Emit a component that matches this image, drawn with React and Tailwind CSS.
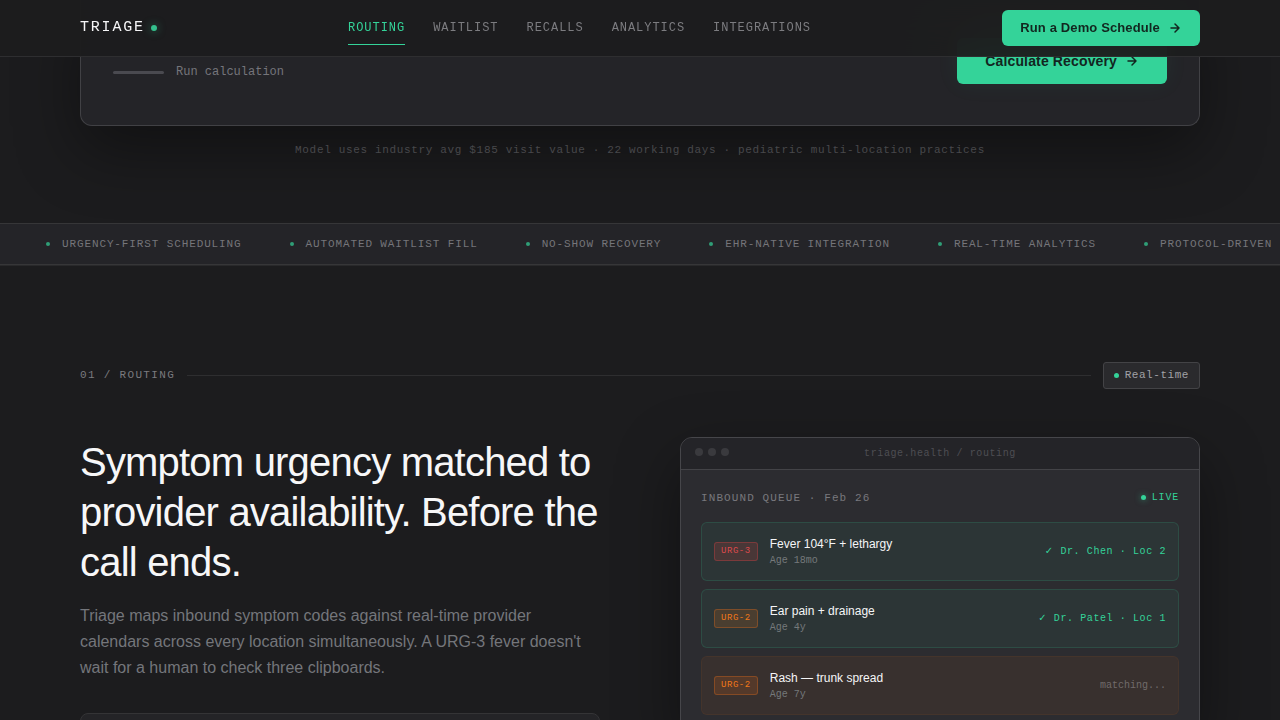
import React from "react";

const mono = "font-['Liberation_Mono','DejaVu_Sans',monospace]";

const navItems = ["ROUTING", "WAITLIST", "RECALLS", "ANALYTICS", "INTEGRATIONS"];

const capabilities = [
  "URGENCY-FIRST SCHEDULING",
  "AUTOMATED WAITLIST FILL",
  "NO-SHOW RECOVERY",
  "EHR-NATIVE INTEGRATION",
  "REAL-TIME ANALYTICS",
  "PROTOCOL-DRIVEN",
];

const queue = [
  { code: "URG-3", name: "Fever 104°F + lethargy", age: "Age 18mo", match: "✓ Dr. Chen · Loc 2" },
  { code: "URG-2", name: "Ear pain + drainage", age: "Age 4y", match: "✓ Dr. Patel · Loc 1" },
  { code: "URG-2", name: "Rash — trunk spread", age: "Age 7y", match: null },
];

const badgeTone = {
  "URG-3": "border-[#ef4444]/30 bg-[#ef4444]/15 text-[#dc4a4c]",
  "URG-2": "border-[#f97316]/30 bg-[#f97316]/15 text-[#f07818]",
};

function Arrow() {
  return (
    <svg
      className="size-3.5 shrink-0"
      viewBox="0 0 14 14"
      fill="none"
      stroke="currentColor"
      strokeWidth="1.5"
      strokeLinecap="round"
      strokeLinejoin="round"
      aria-hidden="true"
    >
      <path d="M3 7h8M7 3l4 4-4 4" />
    </svg>
  );
}

function Header() {
  return (
    <header className="fixed inset-x-0 top-0 z-10 border-b border-[#2e2e30] bg-[#1c1c1e]/95 backdrop-blur-xl">
      <div className="mx-auto flex h-14 max-w-[1120px] items-center justify-between">
        <a href="#top" className={`flex items-center gap-1.5 text-[15px] tracking-[0.12em] text-[#f5f5f7] ${mono}`}>
          TRIAGE
          <span className="size-1.5 rounded-full bg-[#34c08d] shadow-[0_0_8px_rgba(52,211,153,0.5)]" />
        </a>
        <nav className={`flex gap-7 text-xs tracking-[0.08em] text-[#7c7c80] ${mono}`}>
          {navItems.map((item, i) => (
            <a
              key={item}
              href={`#${item.toLowerCase()}`}
              className={
                i === 0
                  ? "border-b border-[#34d399] pt-[9px] pb-2 leading-4 text-[#34d399]"
                  : "border-b border-transparent pt-[9px] pb-2 leading-4"
              }
            >
              {item}
            </a>
          ))}
        </nav>
        <button
          type="button"
          className="flex h-9 items-center gap-2 rounded-md bg-[#34d399] px-[18px] text-[13px] font-bold tracking-[0.01em] text-[#12261f]"
        >
          Run a Demo Schedule
          <Arrow />
        </button>
      </div>
    </header>
  );
}

function Calculator() {
  return (
    <section className="mx-auto max-w-[1120px] pb-16">
      <div className="flex items-center justify-between rounded-b-xl border border-t-0 border-[#414145] bg-[#242428] px-8 pt-[38px] pb-[41px] shadow-[0_24px_64px_rgba(0,0,0,0.4)]">
        <div className="flex items-center gap-3 pt-[22px]">
          <span className="h-[3px] w-[51px] rounded-full bg-[#4a4a50]" />
          <span className={`text-xs leading-[18px] text-[#75757b] ${mono}`}>Run calculation</span>
        </div>
        <button
          type="button"
          className="flex h-[46px] items-center gap-2 rounded-md bg-[#34d399] px-7 text-sm font-bold tracking-[0.01em] text-[#12261f] shadow-[0_0_24px_rgba(52,211,153,0.06)]"
        >
          Calculate Recovery
          <Arrow />
        </button>
      </div>
      <p className={`relative mt-4 text-center text-[11px] leading-[17px] tracking-[0.06em] text-[#48484b] ${mono}`}>
        Model uses industry avg $185 visit value · 22 working days · pediatric multi-location practices
      </p>
    </section>
  );
}

function Ticker() {
  return (
    <div className="overflow-hidden border-y border-[#363638] bg-[#242428] py-3 pl-[46px]">
      <ul className={`flex gap-12 text-[11px] leading-4 tracking-[0.08em] whitespace-nowrap text-[#75757a] ${mono}`}>
        {capabilities.map((c) => (
          <li key={c} className="flex items-center gap-3">
            <span className="size-1 rounded-full bg-[#34d399]/70" />
            {c}
          </li>
        ))}
      </ul>
    </div>
  );
}

function QueueRow({ item }) {
  return (
    <li
      className={
        item.match
          ? "flex items-center gap-3 rounded-md border border-[#34d399]/15 bg-[#34d399]/6 p-3"
          : "flex items-center gap-3 rounded-md border border-[#f97316]/6 bg-[#f97316]/6 p-3"
      }
    >
      <span
        className={`rounded-[3px] border px-1.5 py-0.5 text-[9px] leading-[13px] tracking-[0.06em] ${mono} ${badgeTone[item.code]}`}
      >
        {item.code}
      </span>
      <div className="flex-1">
        <p className="text-xs leading-[18px] text-[#f5f5f7]">{item.name}</p>
        <p className={`text-[10px] leading-[15px] text-[#75797b] ${mono}`}>{item.age}</p>
      </div>
      {item.match ? (
        <span className={`text-[10px] leading-[15px] tracking-[0.06em] text-[#34d399] ${mono}`}>{item.match}</span>
      ) : (
        <span className={`text-[10px] leading-[15px] text-[#716b6b] ${mono}`}>matching...</span>
      )}
    </li>
  );
}

function QueueWindow() {
  return (
    <div className="overflow-hidden rounded-xl border border-[#46464a] bg-[#2c2c30] shadow-[0_24px_64px_rgba(0,0,0,0.4)]">
      <div className="grid grid-cols-[1fr_auto_1fr] items-start border-b border-[#434347] bg-[#242428] px-3.5 py-2">
        <div className="flex gap-[5px] pt-0.5">
          <span className="size-2 rounded-full bg-[#3a3a3e]" />
          <span className="size-2 rounded-full bg-[#3a3a3e]" />
          <span className="size-2 rounded-full bg-[#3a3a3e]" />
        </div>
        <span className={`text-[10px] leading-[15px] tracking-[0.06em] text-[#4e4e53] ${mono}`}>
          triage.health / routing
        </span>
      </div>
      <div className="p-5">
        <div className={`mb-4 flex items-start justify-between ${mono}`}>
          <h3 className="text-[11px] leading-4 tracking-[0.1em] text-[#78787d]">INBOUND QUEUE · Feb 26</h3>
          <span className="flex items-center gap-1.5 text-[10px] leading-[15px] tracking-[0.08em] text-[#34d399]">
            <span className="size-[5px] rounded-full bg-[#34d399] shadow-[0_0_6px_rgba(52,211,153,0.6)]" />
            LIVE
          </span>
        </div>
        <ul className="flex flex-col gap-2">
          {queue.map((item) => (
            <QueueRow key={item.name} item={item} />
          ))}
        </ul>
      </div>
    </div>
  );
}

function Routing() {
  return (
    <section id="routing" className="border-t border-[#29292b] pt-24">
      <div className="mx-auto max-w-[1120px]">
        <div className={`mb-12 flex items-center gap-3 text-[11px] leading-[17px] ${mono}`}>
          <span className="tracking-[0.12em] text-[#7a7a7e]">01 / ROUTING</span>
          <span className="h-px flex-1 bg-[#2e2e30]" />
          <span className="flex items-center gap-1.5 rounded-[3px] border border-[#434346] bg-[#2a2a2d] px-2.5 py-1 tracking-[0.05em] text-[#a1a1a6]">
            <span className="size-[5px] rounded-full bg-[#34d399]" />
            Real-time
          </span>
        </div>
        <div className="grid grid-cols-2 items-start gap-20">
          <div>
            <h2 className="text-[40px] leading-[50px] tracking-[-0.02em] text-[#f7f7f8]">
              Symptom urgency matched to provider availability. Before the call ends.
            </h2>
            <p className="mt-4 text-base leading-[26px] text-[#74767b]">
              Triage maps inbound symptom codes against real-time provider calendars across every location
              simultaneously. A URG-3 fever doesn't wait for a human to check three clipboards.
            </p>
            <div className="mt-8 h-40 rounded-lg border border-[#343436] bg-[#242427]" />
          </div>
          <QueueWindow />
        </div>
      </div>
    </section>
  );
}

export default function App() {
  return (
    <div
      id="top"
      className="h-screen overflow-hidden bg-[#1c1c1e] font-['Liberation_Sans',Arial,sans-serif]"
    >
      <Header />
      <main>
        <Calculator />
        <Ticker />
        <Routing />
      </main>
    </div>
  );
}
